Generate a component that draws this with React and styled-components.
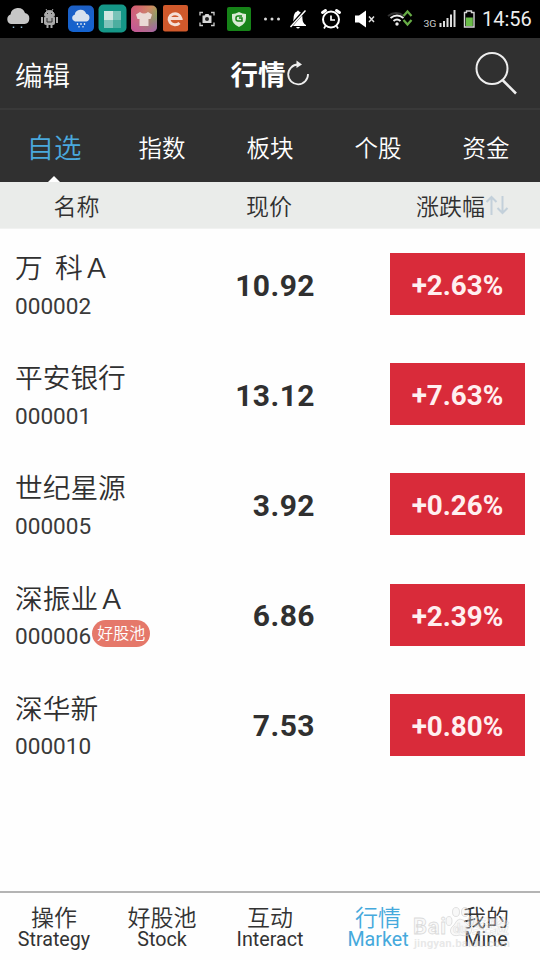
import React from 'react'
import styled, { createGlobalStyle } from 'styled-components';


const GlobalStyle = createGlobalStyle`
  * { box-sizing: border-box; }
  body {
    margin: 0;
    background: #fefefe;
    color: #303030;
    font-family: Roboto, "Noto Sans CJK SC", sans-serif;
  }
`;

const Screen = styled.div`
  width: 540px;
  height: 960px;
  display: flex;
  flex-direction: column;
  overflow: hidden;
  background: #fefefe;
`;

const StatusBar = styled.div`
  height: 38px;
  flex: none;
  display: flex;
  align-items: center;
  background: #000;
`;

const StatusIcons = styled.svg`
  width: 478px;
  height: 38px;
  display: block;
`;

const Clock = styled.span`
  padding-left: 4px;
  color: #eee;
  font-size: 20px;
  line-height: 38px;
`;

const Header = styled.header`
  height: 72px;
  flex: none;
  display: grid;
  grid-template-columns: 1fr auto 1fr;
  align-items: center;
  padding: 0 20px 0 15px;
  background: #303030;
  border-bottom: 2px solid #393939;
  color: #fff;
`;

const Edit = styled.span`
  padding-top: 7px;
  font-size: 27.5px;
  font-weight: 350;
  line-height: 63px;
`;

const Title = styled.h1`
  margin: 0;
  padding: 6px 0 0 5px;
  display: flex;
  align-items: center;
  font-size: 27.5px;
  font-weight: 700;
  line-height: 64px;
`;

const RefreshSvg = styled.svg`
  width: 24px;
  height: 28px;
  margin-bottom: 4px;
`;

const SearchIcon = styled.svg`
  width: 46px;
  height: 46px;
  margin-right: 1px;
  justify-self: end;
`;

const Tabs = styled.nav`
  height: 72px;
  flex: none;
  display: flex;
  background: #303030;
`;

const Tab = styled.div`
  flex: 1;
  position: relative;
  text-align: center;
  padding-top: ${(p) => (p.$active ? '5px' : '6px')};
  line-height: 67px;
  font-weight: 350;
  font-size: ${(p) => (p.$active ? '27.5px' : '23.5px')};
  color: ${(p) => (p.$active ? '#4aa8dc' : '#fff')};
`;

const Pointer = styled.i`
  position: absolute;
  left: 48px;
  bottom: 0;
  border: 6px solid transparent;
  border-top: 0;
  border-bottom-color: #fff;
`;

const Columns = styled.div`
  height: 47px;
  flex: none;
  display: grid;
  grid-template-columns: 153px 232px 155px;
  padding-top: 6px;
  background: #eaecea;
  border-bottom: 1px solid #f1f2f1;
  font-size: 23px;
  font-weight: 350;
  line-height: 40px;
`;

const Column = styled.div`
  display: flex;
  align-items: center;
  justify-content: center;
`;

const SortSvg = styled.svg`
  width: 24px;
  height: 24px;
  margin-bottom: 2px;
`;

const List = styled.main`
  flex: 1;
`;

const Row = styled.div`
  height: 110.2px;
  display: grid;
  grid-template-columns: 185px 130px 1fr;
  align-items: center;
  padding: 0 15px;
`;

const Stock = styled.div`
  display: flex;
  flex-direction: column;
`;

const Name = styled.div`
  height: 40px;
  line-height: 40px;
  font-family: "Noto Sans CJK SC", sans-serif;
  font-size: 27.7px;
  font-weight: 350;
  white-space: pre;
`;

const Code = styled.div`
  height: 36px;
  padding-top: 4px;
  display: flex;
  align-items: center;
  color: #3a3a3a;
  font-size: 22.6px;
`;

const Pool = styled.span`
  width: 58px;
  height: 27px;
  margin: -7px 0 0 1px;
  border-radius: 14px;
  background: #e5786a;
  color: #fff;
  font-size: 16px;
  font-weight: 350;
  line-height: 27px;
  text-align: center;
`;

const Price = styled.div`
  width: 115px;
  padding-top: 2px;
  text-align: right;
  font-size: 30px;
  font-weight: 700;
  letter-spacing: 0.45px;
`;

const Change = styled.div`
  width: 135px;
  height: 62px;
  justify-self: end;
  background: #d92b3a;
  color: #ffeff0;
  font-size: 27.8px;
  font-weight: 700;
  line-height: 65px;
  text-align: center;
`;

const BottomNav = styled.footer`
  height: 69px;
  flex: none;
  display: flex;
  position: relative;
  border-top: 2px solid #b4b4b4;
`;

const NavItem = styled.div`
  flex: 1;
  text-align: center;
  color: ${(p) => (p.$active ? '#45a9dc' : '#333')};
`;

const NavLabel = styled.div`
  height: 35px;
  padding-top: 9px;
  font-size: 23px;
  font-weight: 350;
  line-height: 34px;
`;

const NavSub = styled.div`
  font-size: 19.7px;
  line-height: 24px;
`;

const Watermark = styled.svg`
  position: absolute;
  left: 410px;
  top: 4px;
  width: 130px;
  height: 62px;
`;

const tabs = ['自选', '指数', '板块', '个股', '资金'];

const stocks = [
  { name: '万  科Ａ', code: '000002', price: '10.92', change: '+2.63%' },
  { name: '平安银行', code: '000001', price: '13.12', change: '+7.63%' },
  { name: '世纪星源', code: '000005', price: '3.92', change: '+0.26%' },
  { name: '深振业Ａ', code: '000006', price: '6.86', change: '+2.39%', pool: true },
  { name: '深华新', code: '000010', price: '7.53', change: '+0.80%' },
];

const navItems = [
  ['操作', 'Strategy'],
  ['好股池', 'Stock'],
  ['互动', 'Interact'],
  ['行情', 'Market'],
  ['我的', 'Mine'],
];

const StatusIconRow = () => (
  <StatusIcons viewBox="0 0 478 38">
    <defs>
      <linearGradient id="blue" x1="0" y1="0" x2="0" y2="1">
        <stop offset="0" stopColor="#1d5fc4" />
        <stop offset="1" stopColor="#1463cf" />
      </linearGradient>
      <linearGradient id="shirt" x1="0" y1="0" x2="1" y2="1">
        <stop offset="0" stopColor="#d85a60" />
        <stop offset="0.4" stopColor="#d08a60" />
        <stop offset="0.7" stopColor="#82a860" />
        <stop offset="1" stopColor="#7d78b8" />
      </linearGradient>
      <linearGradient id="pink" x1="0" y1="1" x2="0.7" y2="0">
        <stop offset="0" stopColor="#c8509c" />
        <stop offset="1" stopColor="#c8509c" stopOpacity="0" />
      </linearGradient>
    </defs>

    {/* cloud */}
    <path d="M11 24a5 5 0 0 1-.5-9.500a7.500 7.500 0 0 1 14.500-1.500a5.600 5.600 0 0 1-.5 11z" fill="#c6c6c6" />
    <path d="M13.500 26.500v1.500M21.500 26.500v1.500" stroke="#8ab0c8" strokeWidth="1.500" />

    {/* android */}
    <g fill="#aaa" stroke="#aaa">
      <path d="M44.500 15.500a5 5 0 0 1 10 0z" />
      <path d="M46 9l1.500 2.500M53 9l-1.500 2.500" strokeWidth="1" />
      <rect x="44.500" y="16.500" width="10" height="8" rx="1" />
      <path d="M42 17v6M57 17v6M47.500 25v3M51.500 25v3" strokeWidth="2" />
    </g>
    <path d="M47 18v4h5v-4M47 13.500h1M51 13.500h1" stroke="#333" fill="none" />

    {/* weather */}
    <rect x="68" y="5.500" width="26" height="26.500" rx="5" fill="url(#blue)" />
    <path d="M75 21.500a3.500 3.500 0 0 1-.3-6.800a6 6 0 0 1 11.500-1a4 4 0 0 1 .3 7.800z" fill="#d8e2ee" />
    <path d="M77.500 23v2M81 23v2M84.500 23v2M79 26v1.500M83 26v1.500" stroke="#d8e2ee" strokeWidth="1.300" />

    {/* tiles */}
    <rect x="98.500" y="4.500" width="28" height="28" rx="5" fill="#159787" />
    <path d="M104 11h9v9h-9z" fill="#d0e6e1" />
    <path d="M113 11h8v9h-8z" fill="#78c3b8" />
    <path d="M104 20h9v8h-9z" fill="#80c4bb" />
    <path d="M113 20h8v8h-8z" fill="#4caea0" />

    {/* shirt */}
    <rect x="131" y="5.500" width="26" height="26.500" rx="5" fill="url(#shirt)" />
    <rect x="131" y="5.500" width="26" height="26.500" rx="5" fill="url(#pink)" />
    <path d="M140 12q4 3 8 0l4 2.500l-1.500 4.500h-2v7h-9v-7h-2l-1.500-4.500z" fill="#eadad6" />

    {/* browser */}
    <rect x="163" y="5" width="25" height="26.500" rx="2" fill="#d0592b" />
    <path d="M170 18.500h11a6 5.500 0 1 0-1.500 4.500" stroke="#f5dfd6" strokeWidth="3" fill="none" />

    {/* screenshot */}
    <path d="M200 15.500v-3h3M211 12.500h3v3M214 22.500v3h-3M203 25.500h-3v-3" stroke="#ccc" strokeWidth="1.300" fill="none" />
    <path d="M202.500 15.500h2l1-1.500h3l1 1.500h2v7.500h-9z" fill="#d8d8d8" />
    <circle cx="207" cy="19" r="2" fill="#222" />

    {/* shield */}
    <rect x="227" y="7" width="24" height="24" rx="2" fill="#168318" />
    <path d="M232 14q3.500 0 7-2q3.500 2 7 2v4q0 6-7 9q-7-3-7-9z" fill="#d9ead5" />
    <path d="M242 16h-4q-2 0-2 2v1q0 2 2 2h4v-3h-3" stroke="#168318" strokeWidth="1.500" fill="none" />

    <g fill="#d8d8d8">
      <circle cx="265.500" cy="19" r="1.500" />
      <circle cx="272" cy="19" r="1.500" />
      <circle cx="278.500" cy="19" r="1.500" />
    </g>

    {/* muted bell */}
    <path d="M291 25q2.500-2 2.500-6q0-6.500 3.500-7.500q1-2 2 0q3.500 1 3.500 7.500q0 4 3.500 6v1h-15zM296 27h4q-2 3-4 0z" fill="#fff" />
    <path d="M306 9l-16 18" stroke="#000" strokeWidth="3" />
    <path d="M305.500 10.500l-15 16.500" stroke="#fff" strokeWidth="1.500" />

    {/* alarm */}
    <g stroke="#fff" fill="none">
      <circle cx="331" cy="19.500" r="8" strokeWidth="2" />
      <path d="M322.500 12.500l3-2M339.500 12.500l-3-2" strokeWidth="3" strokeLinecap="round" />
      <path d="M331 15.500v4.500h4M325.500 26l-1.500 2.500M336.500 26l1.500 2.500" strokeWidth="1.700" />
    </g>

    {/* speaker off */}
    <path d="M355 15.500h4l7-5v17l-7-5h-4z" fill="#fff" />
    <path d="M369 16.500l5 5.500M374 16.500l-5 5.500" stroke="#ddd" strokeWidth="1.500" />

    {/* wifi */}
    <g fill="none" strokeWidth="2">
      <path d="M388 16q8-6 16 0" stroke="#333" />
      <path d="M390.500 18q6.500-5 13 0M393.500 21q3.500-3 7 0" stroke="#eee" />
      <path d="M403.500 16l4-4.500l4 4.500M403.500 20l4 4.500l4-4.500" stroke="#67ad46" strokeWidth="2.200" />
    </g>
    <circle cx="397" cy="24" r="1.700" fill="#eee" />

    {/* 3G signal */}
    <text x="423.500" y="26.500" fontSize="9" fill="#ccc" textLength="13" lengthAdjust="spacingAndGlyphs">3G</text>
    <path d="M440.500 27v-4M444 27v-6M447.500 27v-9M451 27v-12.500M454.500 27v-17" stroke="#ddd" strokeWidth="2" />

    {/* battery */}
    <path d="M464.500 12.500h2v-1.500h5v1.500h2.500v14.500h-9.500z" stroke="#d8d8d8" strokeWidth="1.400" fill="none" />
    <path d="M465.800 17.500h7v8.500h-7z" fill="#6bbd49" />
  </StatusIcons>
);

const RefreshIcon = () => (
  <RefreshSvg viewBox="0 0 24 28">
    <path d="M22 14a9.900 9.900 0 1 1-10-9.500" stroke="#eee" strokeWidth="1.800" fill="none" />
    <path d="M10.500 .5l5.500 4l-5.500 3.500z" fill="#eee" />
  </RefreshSvg>
);

const SortIcon = () => (
  <SortSvg viewBox="0 0 24 24" fill="none" stroke="#c3d0da" strokeWidth="2">
    <path d="M6.500 20V2M1.500 7l5-5l5 5M17.500 1v17M12.500 13l5 5l5-5" />
  </SortSvg>
);

const BaiduMark = () => (
  <Watermark viewBox="0 0 130 62">
    <g fill="#eee" fillOpacity="0.35" stroke="#d2d2d2" strokeOpacity="0.8" strokeWidth="0.8">
      <text x="3" y="37" fontSize="22" fontWeight="700" textLength="33">Bai</text>
      <ellipse cx="39" cy="24" rx="3" ry="4.500" />
      <ellipse cx="46" cy="15" rx="3.500" ry="4.500" />
      <ellipse cx="55" cy="15" rx="3.500" ry="4.500" />
      <ellipse cx="61" cy="24" rx="3" ry="4.500" />
      <path d="M50 22q5 0 8 6q6 4 2 9q-3 3-10 1q-7 2-9-2q-2-4 3-8q3-6 6-6z" />
    </g>
    <g fill="#fff" fillOpacity="0.3" stroke="#ccc" strokeOpacity="0.5" strokeWidth="0.7">
      <text x="43" y="36" fontSize="13" fontWeight="700">du</text>
      <text x="62" y="37" fontSize="19" fontWeight="700" textLength="37">经验</text>
    </g>
    <text x="4" y="50" fontSize="11.500" fontWeight="700" fill="#ccc" fillOpacity="0.45" textLength="96">jingyan.baidu.com</text>
  </Watermark>
);

const App = () => {
  return (
    <>
      <GlobalStyle />
      <Screen>
        <StatusBar>
          <StatusIconRow />
          <Clock>14:56</Clock>
        </StatusBar>

        <Header>
          <Edit>编辑</Edit>
          <Title>行情<RefreshIcon /></Title>
          <SearchIcon viewBox="0 0 46 46" fill="none" stroke="#eee">
            <circle cx="19" cy="18.500" r="15.500" strokeWidth="2" />
            <path d="M29.500 30L43 43.500" strokeWidth="2.600" />
          </SearchIcon>
        </Header>

        <Tabs>
          {tabs.map((tab, i) => (
            <Tab key={tab} $active={i === 0}>
              {tab}
              {i === 0 && <Pointer />}
            </Tab>
          ))}
        </Tabs>

        <Columns>
          <Column>名称</Column>
          <Column>现价</Column>
          <Column>涨跌幅<SortIcon /></Column>
        </Columns>

        <List>
          {stocks.map((stock) => (
            <Row key={stock.code}>
              <Stock>
                <Name>{stock.name}</Name>
                <Code>
                  {stock.code}
                  {stock.pool && <Pool>好股池</Pool>}
                </Code>
              </Stock>
              <Price>{stock.price}</Price>
              <Change>{stock.change}</Change>
            </Row>
          ))}
        </List>

        <BottomNav>
          {navItems.map(([label, sub]) => (
            <NavItem key={sub} $active={sub === 'Market'}>
              <NavLabel>{label}</NavLabel>
              <NavSub>{sub}</NavSub>
            </NavItem>
          ))}
          <BaiduMark />
        </BottomNav>
      </Screen>
    </>
  )
}

export default App
